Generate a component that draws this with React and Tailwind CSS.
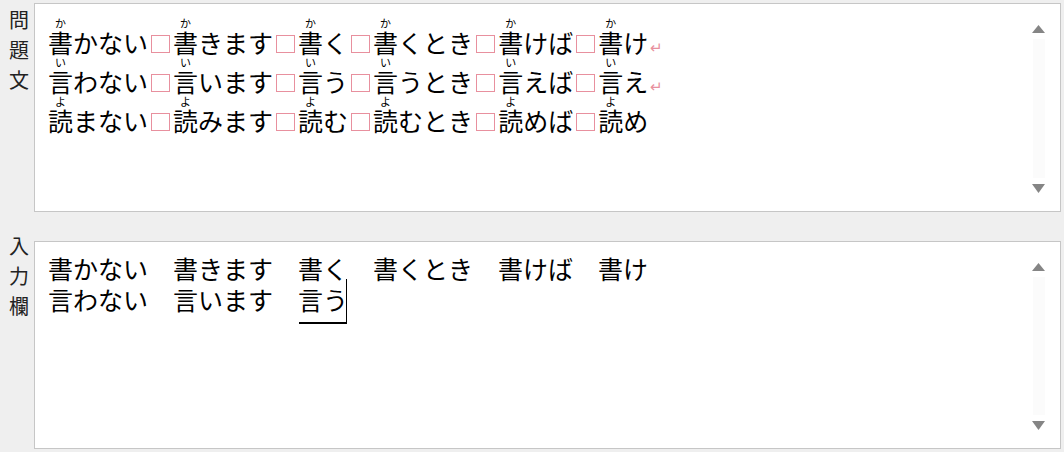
const rows = [
  { kanji: "書", kana: "か", forms: ["かない", "きます", "く", "くとき", "けば", "け"], eol: true },
  { kanji: "言", kana: "い", forms: ["わない", "います", "う", "うとき", "えば", "え"], eol: true },
  { kanji: "読", kana: "よ", forms: ["まない", "みます", "む", "むとき", "めば", "め"], eol: false },
];

const jp = { fontFamily: '"Noto Sans CJK JP", "Noto Sans", sans-serif' };

function Space() {
  // visualised full-width space
  return (
    <span className="inline-flex w-[25px] h-[18px] justify-center align-baseline">
      <span className="box-border w-[19px] h-[18px] border border-[#e8909e]" />
    </span>
  );
}

function Furigana({ kanji, kana }) {
  return (
    <span className="relative">
      {kanji}
      <span className="absolute left-0 right-0 -top-[6px] text-center text-[11px] leading-none">{kana}</span>
    </span>
  );
}

function Scroller() {
  return (
    <div className="flex w-[13px] flex-col items-center pt-[21px] pb-[18px] mr-[15px]">
      <svg width="13" height="8" viewBox="0 0 13 8">
        <path d="M6.5 0L13 8H0z" fill="#858585" />
      </svg>
      <div className="w-[12px] flex-1 my-[6px] bg-[#fbfbfb]" />
      <svg width="13" height="9" viewBox="0 0 13 9">
        <path d="M0 0H13L6.5 9z" fill="#858585" />
      </svg>
    </div>
  );
}

function Label({ text, className }) {
  return (
    <div className={"w-[34px] pl-[9px] text-[20px] leading-[30px] text-[#222] " + className}>
      {text.split("").map((c) => (
        <div key={c}>{c}</div>
      ))}
    </div>
  );
}

export default function App() {
  return (
    <div className="w-[1064px] h-[452px] bg-[#efefef] pt-[3px] overflow-hidden" style={jp}>
      <div className="flex">
        <Label text="問題文" className="pt-[2px]" />
        <div className="flex h-[209px] w-[1027px] border border-[#c6c6c6] bg-white">
          <div className="flex-1 pl-[13px] pt-[19px] text-[25px] leading-[39px] text-black">
            {rows.map((r) => (
              <div key={r.kanji} className="h-[39px] whitespace-nowrap">
                {r.forms.map((f, i) => (
                  <span key={i}>
                    {i > 0 && <Space />}
                    <Furigana kanji={r.kanji} kana={r.kana} />
                    {f}
                  </span>
                ))}
                {r.eol && <span className="ml-[2px] text-[15px] leading-none text-[#e8909e]">↵</span>}
              </div>
            ))}
          </div>
          <Scroller />
        </div>
      </div>

      <div className="flex mt-[29px]">
        <Label text="入力欄" className="-mt-[10px]" />
        <div className="flex h-[208px] w-[1027px] border border-[#c6c6c6] bg-white">
          <div className="flex-1 pl-[13px] pt-[11px] text-[25px] leading-[31px] text-black">
            <div className="whitespace-nowrap">書かない　書きます　書く　書くとき　書けば　書け</div>
            <div className="whitespace-nowrap">
              {"言わない\u3000言います\u3000"}
              <span className="relative">
                言う
                <span className="absolute left-[1px] right-[2px] bottom-[-7px] h-[2px] bg-black" />
                <span className="absolute right-[1px] top-[-2px] bottom-[-7px] w-[1.5px] bg-black" />
              </span>
            </div>
          </div>
          <Scroller />
        </div>
      </div>
    </div>
  );
}
